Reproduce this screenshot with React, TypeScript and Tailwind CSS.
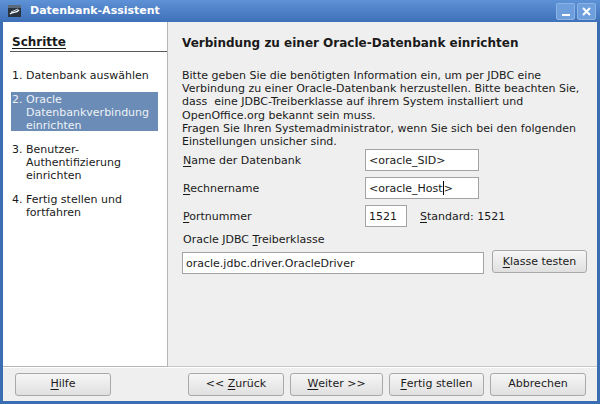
import React from 'react';

const font = { fontFamily: '"DejaVu Sans", sans-serif' };

const U = ({ children }: { children: React.ReactNode }) => <span className="underline underline-offset-2">{children}</span>;

const Btn = ({ children, w }: { children: React.ReactNode; w: string }) => (
  <div className={`${w} h-[23px] flex items-center justify-center rounded-[3px] border border-[#a9a9a9] bg-gradient-to-b from-[#f6f6f6] to-[#e0e0e0] text-[11px] text-[#1a1a1a] whitespace-pre`}>
    {children}
  </div>
);

const Field = ({ children, w }: { children: React.ReactNode; w: string }) => (
  <div className={`${w} h-[22px] flex items-center px-[3px] bg-white border border-[#a3a3a3] text-[11px] text-[#1a1a1a]`}>{children}</div>
);

const App = () => {
  return (
    <div className="w-[600px] h-[404px] flex flex-col bg-[#3b6db3]" style={font}>
      {/* Title bar */}
      <div className="h-[22px] flex items-center bg-gradient-to-b from-[#5e92d6] to-[#3d70b8] pl-[8px] pr-[4px]">
        <svg width="13" height="12" viewBox="0 0 13 12">
          <rect x="0" y="0" width="13" height="12" fill="#2a3440" />
          <rect x="0" y="0" width="13" height="3" fill="#5a6a7a" />
          <path d="M2 9 C5 6, 8 9, 11 5" stroke="#ffffff" strokeWidth="1.3" fill="none" />
          <path d="M3 7 L10 4" stroke="#cfd8e2" strokeWidth="1" />
        </svg>
        <span className="ml-[9px] text-[11px] font-bold text-white">Datenbank-Assistent</span>
        <div className="ml-auto flex gap-[2px]">
          <div className="w-[19px] h-[17px] rounded-[2px] bg-[#6e9fdc] border border-[#8ab3e6] flex items-end justify-center pb-[3px]">
            <div className="w-[8px] h-[2px] bg-white" />
          </div>
          <div className="w-[19px] h-[17px] rounded-[2px] bg-[#6e9fdc] border border-[#8ab3e6] flex items-center justify-center">
            <svg width="9" height="9" viewBox="0 0 9 9">
              <path d="M1 1 L8 8 M8 1 L1 8" stroke="#ffffff" strokeWidth="2" />
            </svg>
          </div>
        </div>
      </div>

      {/* Body */}
      <div className="flex-1 mx-[3px] mb-[3px] bg-[#efefef] flex flex-col text-[#1a1a1a]">
        <div className="flex flex-1">
          {/* Steps */}
          <div className="w-[165px] bg-white border-r border-[#b5b5b5] border-b pl-[7px] pt-[14px] text-[11px] leading-[13px]">
            <div className="border-b border-[#5a5a5a] pl-[2px] pb-[2px] font-bold text-[12px]">
              <span className="underline underline-offset-2">Schritte</span>
            </div>
            <div className="pl-[2px] pt-[17px]">1. Datenbank auswählen</div>
            <div className="mt-[10px] ml-[1px] w-[147px] h-[39px] bg-[#6a8cb6] text-[#eef2f7] pl-[1px] pt-[1px]">
              <div>2. Oracle</div>
              <div className="pl-[14px]">Datenbankverbindung</div>
              <div className="pl-[14px]">einrichten</div>
            </div>
            <div className="pl-[2px] pt-[12px]">
              <div>3. Benutzer-</div>
              <div className="pl-[14px]">Authentifizierung</div>
              <div className="pl-[14px]">einrichten</div>
            </div>
            <div className="pl-[2px] pt-[11px]">
              <div>4. Fertig stellen und</div>
              <div className="pl-[14px]">fortfahren</div>
            </div>
          </div>

          {/* Page */}
          <div className="flex-1 pl-[14px] pr-[9px] pt-[15px] text-[11px] leading-[13px] border-b border-[#c6c6c6]">
            <div className="font-bold text-[12px]">Verbindung zu einer Oracle-Datenbank einrichten</div>
            <div className="mt-[19px] leading-[13.2px]">
              Bitte geben Sie die benötigten Information ein, um per JDBC eine<br />
              Verbindung zu einer Oracle-Datenbank herzustellen. Bitte beachten Sie,<br />
              dass&nbsp; eine JDBC-Treiberklasse auf ihrem System installiert und<br />
              OpenOffice.org bekannt sein muss.<br />
              Fragen Sie Ihren Systemadministrator, wenn Sie sich bei den folgenden<br />
              Einstellungen unsicher sind.
            </div>
            <div className="mt-[1px] flex items-center h-[22px]">
              <span className="w-[183px] pl-[1px]"><U>N</U>ame der Datenbank</span>
              <Field w="w-[114px]">&lt;oracle_SID&gt;</Field>
            </div>
            <div className="mt-[6px] flex items-center h-[22px]">
              <span className="w-[183px] pl-[1px]"><U>R</U>echnername</span>
              <Field w="w-[114px]">
                &lt;oracle_Host<span className="w-px h-[14px] bg-black" />&gt;
              </Field>
            </div>
            <div className="mt-[6px] flex items-center h-[22px]">
              <span className="w-[183px] pl-[1px]"><U>P</U>ortnummer</span>
              <Field w="w-[42px]">1521</Field>
              <span className="ml-[13px]"><U>S</U>tandard: 1521</span>
            </div>
            <div className="mt-[6px] pl-[1px]">Oracle JDBC <U>T</U>reiberklasse</div>
            <div className="mt-[6px] flex items-center">
              <Field w="w-[302px]">oracle.jdbc.driver.OracleDriver</Field>
              <div className="ml-[8px] -mt-[3px]">
                <Btn w="w-[95px]"><U>K</U>lasse testen</Btn>
              </div>
            </div>
          </div>
        </div>

        {/* Buttons */}
        <div className="h-[34px] flex items-center pl-[12px] pr-[11px] border-t border-white">
          <Btn w="w-[96px]"><U>H</U>ilfe</Btn>
          <div className="ml-auto flex gap-[6px]">
            <Btn w="w-[96px]">{'<< '}<U>Z</U>urück</Btn>
            <Btn w="w-[93px]"><U>W</U>eiter &gt;&gt;</Btn>
            <Btn w="w-[95px]"><U>F</U>ertig stellen</Btn>
            <Btn w="w-[96px]">Abbrechen</Btn>
          </div>
        </div>
      </div>
    </div>
  );
};

export default App;
